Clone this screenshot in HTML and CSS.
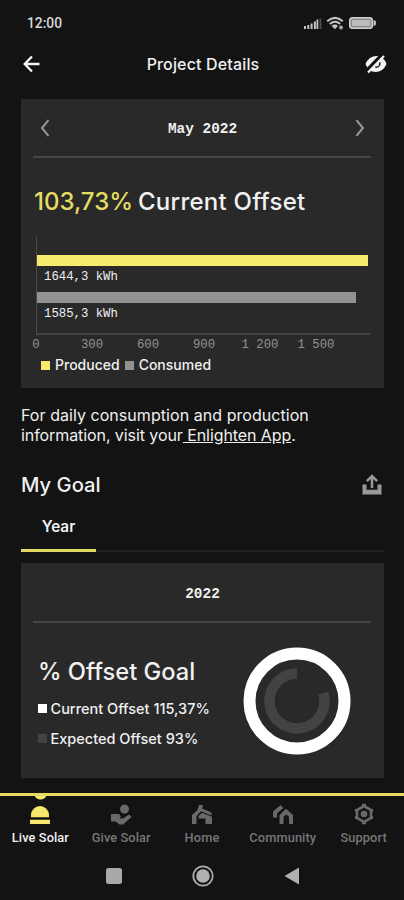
FILE: index.html
```html
<!DOCTYPE html>
<html lang="en">
  <head>
    <meta charset="UTF-8" />
    <meta name="viewport" content="width=device-width, initial-scale=1.0" />
    <title>Project Details</title>
    <link rel="stylesheet" href="styles.css">
  </head>
  <body>
    <!-- status bar -->
    <div class="status">
      <span class="time">12:00</span>
      <svg class="status-icons" width="74" height="16" viewBox="0 0 74 16">
        <path d="M1 11h2v3H1zM4.300 10h2v4h-2zM7.600 8.500h2V14h-2zM10.900 6.500h2V14h-2zM13.500 4.500h1.800V14h-1.800z" fill="#c4c4c4" />
        <path d="M16.500 3.500h1.800V14h-1.800z" fill="#505050" />
        <g fill="none" stroke="#c4c4c4" stroke-width="2">
          <path d="M24.200 6.200Q32 -.5 39.800 6.200" />
          <path d="M26.800 8.900Q32 4.500 37.200 8.900" />
        </g>
        <path d="M28.500 10.800Q32 8.300 35 10.800L32 14.200z" fill="#c4c4c4" />
        <circle cx="38" cy="12.600" r="2" fill="#a8a8a8" />
        <rect x="46.600" y="2.600" width="22.800" height="10.800" rx="2.600" fill="#a8a8a8" stroke="#d0d0d0" stroke-width="1.200" />
        <rect x="48.500" y="4.500" width="19" height="7" rx="1" fill="#bdbdbd" stroke="#777" stroke-width=".7" />
        <path d="M70.500 5q2.500 0 2.500 3t-2.500 3z" fill="#c4c4c4" />
      </svg>
    </div>

    <!-- title bar -->
    <header class="appbar">
      <svg width="18" height="18" viewBox="0 0 18 18" fill="none" stroke="#f4f4f4" stroke-width="2.300">
        <path d="M16.500 9H2.500M9 1.500L1.700 9l7.300 7.500" />
      </svg>
      <h1>Project Details</h1>
      <svg width="22" height="20" viewBox="0 0 22 20">
        <path d="M.5 10Q4 2 11.500 2Q18.500 2 21.500 10Q18 18 10.500 18Q3.500 18 .5 10z" fill="#f4f4f4" />
        <path d="M13.500 7.500a3 3 0 1 1-3.500 5" fill="none" stroke="#131313" stroke-width="1.300" />
        <path d="M1.200 17L17.200 .5" stroke="#131313" stroke-width="3.600" />
        <path d="M3 18.500L19 2" stroke="#f4f4f4" stroke-width="2.200" />
      </svg>
    </header>

    <main>
      <!-- monthly offset -->
      <section class="card month">
        <div class="card-head">
          <svg width="10" height="18" viewBox="0 0 10 18"><path d="M8.500 1.200L2 9l6.500 7.800" /></svg>
          <span>May 2022</span>
          <svg width="10" height="18" viewBox="0 0 10 18"><path d="M1.500 1.200L8 9l-6.500 7.800" /></svg>
        </div>
        <h2><span class="percent">103,73%</span> <span>Current Offset</span></h2>
        <div class="chart">
          <div class="bar produced" style="width: 99.4%"></div>
          <p>1644,3 kWh</p>
          <div class="bar consumed" style="width: 95.7%"></div>
          <p>1585,3 kWh</p>
        </div>
        <div class="ticks">
          <span>0</span><span>300</span><span>600</span><span>900</span><span>1 200</span><span>1 500</span>
        </div>
        <div class="legend">
          <i class="produced"></i><span>Produced</span>
          <i class="consumed"></i><span>Consumed</span>
        </div>
      </section>

      <p class="info"><span class="line">For daily consumption and production</span><br><span class="line second">information, visit your<a href="#"> Enlighten App</a>.</span></p>

      <div class="goal-head">
        <h3>My Goal</h3>
        <svg width="20" height="21" viewBox="0 0 20 21">
          <path d="M.5 10.500h4v5.300h11v-5.300h4V20.500H.5z" fill="#999" />
          <path d="M10 14V2.500M4.800 7.200L10 2l5.200 5.200" fill="none" stroke="#999" stroke-width="2.500" />
        </svg>
      </div>

      <div class="tabs"><span class="tab active">Year</span></div>

      <!-- yearly goal -->
      <section class="card year">
        <div class="card-head"><span>2022</span></div>
        <div class="goal">
          <div class="goal-text">
            <h2>% Offset Goal</h2>
            <p><i class="current"></i><span>Current Offset 115,37%</span></p>
            <p><i class="expected"></i><span>Expected Offset 93%</span></p>
          </div>
          <svg class="donut" width="108" height="108" viewBox="-54 -54 108 108" fill="none">
            <circle r="47.500" stroke="#fff" stroke-width="12" />
            <path d="M0 -27.500A27.500 27.500 0 1 0 26.300 -8" stroke="#434343" stroke-width="10.500" />
          </svg>
        </div>
      </section>
    </main>

    <!-- bottom navigation -->
    <nav>
      <a class="item active" href="#">
        <svg width="22" height="22" viewBox="0 0 22 22" fill="#f6e96b">
          <path d="M2 14.300V12a9 9 0 0 1 18 0v2.300zM1 16.800h20V21H1z" />
        </svg>
        <span>Live Solar</span>
      </a>
      <a class="item" href="#">
        <svg width="22" height="22" viewBox="0 0 22 22" fill="#696969">
          <circle cx="14.500" cy="6" r="4.500" />
          <path d="M1 11h8l2 2.500-1.500 2h3.500l6-4 2.500 2.500-8.500 7.500H9.500L5.500 18.500H1z" />
        </svg>
        <span>Give Solar</span>
      </a>
      <a class="item" href="#">
        <svg width="22" height="22" viewBox="0 0 22 22" fill="#696969">
          <path d="M1 21v-9l5.500-5L8 2h4l-1 3.500 9.500 4v3L10 8.200 5.500 13v8z" />
          <path d="M7.500 13L11 9.800l10 4V21h-6.500v-5.500h-7z" />
        </svg>
        <span>Home</span>
      </a>
      <a class="item" href="#">
        <svg width="22" height="22" viewBox="0 0 22 22" fill="none" stroke="#696969" stroke-width="4">
          <path d="M3 14.500V9.500l7-6" />
          <path d="M9.500 21v-8l4.500-4.500 5 4.500v8" />
        </svg>
        <span>Community</span>
      </a>
      <a class="item" href="#">
        <svg width="22" height="22" viewBox="0 0 22 22" fill="none" stroke="#696969">
          <path d="M11 3l7 4v8l-7 4-7-4V7z" stroke-width="2.600" />
          <path d="M9 2.300h4M9 19.700h4M3.500 6v3M3.500 13v3M18.500 6v3M18.500 13v3" stroke-width="3" />
          <circle cx="11" cy="11" r="3.300" fill="#696969" stroke="none" />
        </svg>
        <span>Support</span>
      </a>
    </nav>

    <!-- system buttons -->
    <div class="system">
      <svg width="16" height="16" viewBox="0 0 16 16"><rect width="16" height="16" rx="2.500" fill="#a9a9a9" /></svg>
      <svg width="22" height="22" viewBox="0 0 22 22"><circle cx="11" cy="11" r="9.700" fill="none" stroke="#a9a9a9" stroke-width="1.800" /><circle cx="11" cy="11" r="6.800" fill="#b0b0b0" /></svg>
      <svg width="16" height="18" viewBox="0 0 16 18"><path d="M15 .5v17L.5 9z" fill="#b0b0b0" /></svg>
    </div>
  </body>
</html>
```
FILE: styles.css
```css
* {
  margin: 0;
  padding: 0;
  box-sizing: border-box;
}

html {
  background-color: #131313;
}
body {
  width: 404px;
  height: 900px;
  display: flex;
  flex-direction: column;
  overflow: hidden;
  background-color: #131313;
  color: #f0f0f0;
  font-family: Inter, "Liberation Sans", sans-serif;
}
svg {
  display: block;
  flex: none;
}
span,
h2 {
  white-space: nowrap;
}
a {
  color: inherit;
}

/* status bar */
.status {
  height: 46px;
  padding: 0 27px;
  display: flex;
  align-items: center;
  justify-content: space-between;
}
.time {
  color: #d8d8d8;
  font: 500 13.8px Roboto, sans-serif;
}

/* title bar */
.appbar {
  height: 36px;
  padding: 0 17px 0 23px;
  display: flex;
  align-items: center;
  justify-content: space-between;
}
.appbar h1 {
  font-size: 16px;
  font-weight: 500;
  letter-spacing: 0.15px;
}

main {
  height: 711px;
  padding: 17px 20px 0 21px;
}

/* cards */
.card {
  padding: 0 13px 0 12px;
  background-color: #292929;
}
.month {
  height: 289px;
}
.year {
  height: 215px;
}
.card-head {
  height: 59px;
  padding: 0 6px 0 7px;
  display: flex;
  align-items: center;
  justify-content: space-between;
  border-bottom: 2px solid #464646;
  font: bold 14.4px "Liberation Mono", monospace;
}
.card-head span {
  padding-top: 3px;
}
.card-head svg {
  fill: none;
  stroke: #999;
  stroke-width: 2;
}
.year .card-head {
  justify-content: center;
  height: 60px;
}
.card h2 {
  font-size: 24px;
  font-weight: 500;
  line-height: 30px;
}
.month h2 {
  margin-top: 29px;
  padding-left: 1px;
  display: flex;
  gap: 5px;
  letter-spacing: 0.25px;
}
.month .percent {
  color: #e6dc62;
  letter-spacing: 0;
}

/* bar chart */
.chart {
  width: 334px;
  height: 99px;
  margin: 19px 0 0 3px;
  padding-top: 19px;
  border-left: 1px solid #4b4b4b;
  border-bottom: 2px solid #444;
}
.bar {
  height: 11px;
}
.produced {
  background-color: #f7eb6b;
}
.consumed {
  background-color: #929292;
}
.chart p {
  height: 26px;
  padding-left: 7px;
  font: 12.3px/22px "Liberation Mono", monospace;
}
.ticks {
  width: 336px;
  height: 18px;
  margin-left: -25px;
  display: grid;
  grid-template-columns: repeat(6, 56px);
  text-align: center;
  color: #929292;
  font: 12.3px/20px "Liberation Mono", monospace;
}
.legend {
  margin: 2px 0 0 8px;
  display: flex;
  align-items: center;
  gap: 5px;
  font-size: 14px;
  font-weight: 500;
  line-height: 20px;
}
i {
  width: 9px;
  height: 9px;
  flex: none;
}

.info {
  margin-top: 18px;
  font-size: 16px;
  line-height: 19.5px;
  letter-spacing: 0.05px;
}
.info .second {
  letter-spacing: -0.08px;
}

/* goal */
.goal-head {
  height: 40px;
  margin-top: 19px;
  padding-right: 2px;
  display: flex;
  align-items: center;
  justify-content: space-between;
}
.goal-head h3 {
  font-size: 20.2px;
  font-weight: 500;
}
.tabs {
  height: 48px;
  margin-bottom: 11px;
  display: flex;
  box-shadow: inset 0 -2px #222;
}
.tab {
  width: 75px;
  font-size: 15.3px;
  font-weight: 600;
  line-height: 46px;
  text-align: center;
}
.tab.active {
  border-bottom: 3px solid #e3da65;
}
.goal {
  padding: 24px 20.5px 0 5px;
  display: flex;
  justify-content: space-between;
}
.year h2 {
  margin: 10px 0 6px;
  font-size: 23.7px;
}
.goal-text p {
  height: 30px;
  display: flex;
  align-items: center;
  gap: 3.5px;
  font-size: 14.5px;
  font-weight: 500;
}
.current {
  background-color: #fff;
}
.expected {
  background-color: #434343;
}

/* bottom navigation */
nav {
  height: 58px;
  display: grid;
  grid-template-columns: repeat(5, 1fr);
  border-top: 3px solid #e6dc62;
}
.item {
  padding-top: 7px;
  display: flex;
  flex-direction: column;
  align-items: center;
  gap: 3px;
  color: #777;
  font: 500 12.8px/19px Roboto, sans-serif;
  letter-spacing: 0.1px;
  text-decoration: none;
}
.item.active {
  color: #f0f0f0;
  background: radial-gradient(circle at 50% -3px, #f6e96b 6px, transparent 7px);
}

/* system buttons */
.system {
  height: 49px;
  padding-left: 106px;
  display: flex;
  align-items: center;
  gap: 70px;
}
```
